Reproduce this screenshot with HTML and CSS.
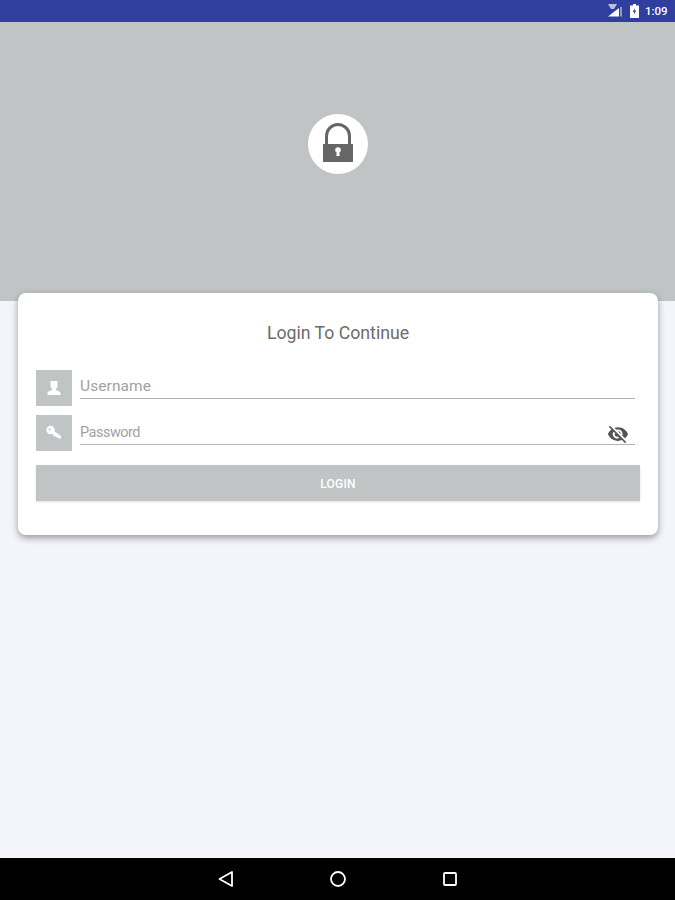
FILE: index.html
```html
<!DOCTYPE html>
<html lang="en">
<head>
  <meta charset="UTF-8" />
  <title>Login</title>
  <meta name="viewport" content="width=device-width, initial-scale=1" />
  <link rel="stylesheet" href="styles.css">
</head>
<body>
  <!-- Status bar -->
  <div class="status-bar">
    <svg class="status-signal" width="16" height="14" viewBox="0 0 16 14">
      <path d="M1 0h9L7 5H4z" fill="#b9c0e4"/>
      <path d="M1 12.500L12 4v8.500z" fill="#fff"/>
      <path d="M13 3h2v9.500h-2z" fill="#8f9ad0"/>
    </svg>
    <svg class="status-battery" width="9" height="14" viewBox="0 0 9 14">
      <path d="M3 0h3v1.500h3V14H0V1.500h3z" fill="#fff"/>
      <path d="M5 3.500L2.800 8h1.500l-.5 3 2.400-4.500H4.500z" fill="#303f9f"/>
    </svg>
    <span class="status-time">1:09</span>
  </div>

  <!-- Grey header with lock -->
  <div class="header">
    <div class="lock-circle">
      <svg width="60" height="60" viewBox="0 0 60 60">
        <path d="M18.500 31v-9a11.500 11.500 0 0 1 23 0v9" fill="none" stroke="#666" stroke-width="3"/>
        <path d="M15 30h30v18H15z" fill="#666"/>
        <circle cx="30" cy="36" r="2.800" fill="#fff"/>
        <path d="M29 36h2l.7 6h-3.400z" fill="#fff"/>
      </svg>
    </div>
  </div>

  <div class="content">
    <div class="card">
      <div class="card-title">Login To Continue</div>

      <div class="field-row">
        <div class="field-icon">
          <svg width="16" height="16" viewBox="0 0 16 16">
            <path d="M4.500 1h7v5.500L9.800 9.500c0 1 3.700 1.500 4.700 3.200V15h-13v-2.300c1-1.700 4.700-2.200 4.700-3.200L4.500 6.500z" fill="#fff"/>
          </svg>
        </div>
        <div class="field-input">
          <span class="placeholder">Username</span>
        </div>
      </div>

      <div class="field-row">
        <div class="field-icon">
          <svg width="18" height="18" viewBox="0 0 18 18">
            <circle cx="5.500" cy="6" r="4.200" fill="#fff"/>
            <path d="M7 5.500l9 6.500v2.500h-2.500l-1.500-1.500-1 .5-1-1.500-1 .2L6 8z" fill="#fff"/>
            <circle cx="4.500" cy="5.500" r="1" fill="#c0c4c4"/>
          </svg>
        </div>
        <div class="field-input field-input-password">
          <span class="placeholder placeholder-password">Password</span>
          <svg class="eye-icon" width="22" height="22" viewBox="0 0 24 24">
            <path fill="#555" d="M12 7c2.760 0 5 2.240 5 5 0 .65-.13 1.260-.36 1.830l2.920 2.920c1.510-1.260 2.700-2.890 3.430-4.750-1.730-4.390-6-7.500-11-7.500-1.400 0-2.740.25-3.980.7l2.160 2.160C10.740 7.130 11.350 7 12 7zM2 4.270l2.280 2.280.46.46C3.080 8.300 1.780 10.020 1 12c1.730 4.390 6 7.500 11 7.500 1.550 0 3.030-.3 4.380-.84l.42.42L19.730 22 21 20.730 3.270 3 2 4.270zM7.530 9.800l1.550 1.550c-.05.21-.8.430-.8.650 0 1.660 1.340 3 3 3 .22 0 .44-.03.65-.08l1.550 1.550c-.67.33-1.410.53-2.200.53-2.760 0-5-2.240-5-5 0-.79.2-1.530.53-2.200zm4.310-.78l3.150 3.150.02-.16c0-1.660-1.340-3-3-3l-.17.01z"/>
          </svg>
        </div>
      </div>

      <button class="login-btn">LOGIN</button>
    </div>
  </div>

  <!-- Android nav bar -->
  <div class="nav-bar">
    <svg width="18" height="18" viewBox="0 0 18 18">
      <path d="M15 2v14L2.500 9z" fill="none" stroke="#fff" stroke-width="1.800" stroke-linejoin="round"/>
    </svg>
    <svg width="18" height="18" viewBox="0 0 18 18">
      <circle cx="9" cy="9" r="7" fill="none" stroke="#fff" stroke-width="1.800"/>
    </svg>
    <svg width="18" height="18" viewBox="0 0 18 18">
      <rect x="3" y="3" width="12" height="12" rx="1" fill="none" stroke="#fff" stroke-width="1.800"/>
    </svg>
  </div>
</body>
</html>
```

FILE: styles.css
```css
html, body {
  height: 100%;
}
body {
  margin: 0;
  background: #f3f5fa;
  font-family: 'Roboto', Arial, sans-serif;
  color: #666;
  display: flex;
  flex-direction: column;
  overflow: hidden;
}
.status-bar {
  height: 22px;
  background: #303f9f;
  display: flex;
  align-items: center;
  justify-content: flex-end;
  padding-right: 6px;
  box-sizing: border-box;
}
.status-signal {
  margin-right: 7px;
}
.status-battery {
  margin-right: 6px;
}
.status-time {
  color: #fff;
  font-size: 11.500px;
  font-weight: 500;
  width: 24px;
}
.header {
  height: 279px;
  background: #c0c4c4;
  display: flex;
  justify-content: center;
  padding-top: 92px;
  box-sizing: border-box;
}
.lock-circle {
  width: 60px;
  height: 60px;
  border-radius: 50%;
  background: #fff;
}
.content {
  flex: 1;
  padding: 0 17px 0 18px;
}
.card {
  margin-top: -8px;
  height: 242px;
  background: #fff;
  border-radius: 8px;
  box-shadow: 0 3px 7px rgba(0,0,0,0.38);
  padding: 0 18px;
  box-sizing: border-box;
}
.card-title {
  font-size: 17.700px;
  color: #6c6c6c;
  text-align: center;
  padding-top: 30px;
  height: 77px;
  line-height: 21px;
  box-sizing: border-box;
}
.field-row {
  display: flex;
  height: 36px;
  margin-bottom: 9px;
}
.field-icon {
  width: 36px;
  height: 36px;
  background: #c0c4c4;
  display: flex;
  align-items: center;
  justify-content: center;
  flex-shrink: 0;
}
.field-input {
  margin-left: 8px;
  width: 555px;
  height: 28px;
  border-bottom: 1.500px solid #b4b6b6;
  display: flex;
  align-items: center;
  justify-content: space-between;
  position: relative;
}
.field-input-password {
  height: 29px;
}
.placeholder {
  font-size: 15.500px;
  letter-spacing: 0.100px;
  color: #a2a2a2;
  padding-top: 4px;
}
.placeholder-password {
  font-size: 14.500px;
  letter-spacing: -0.500px;
  padding-top: 5px;
}
.eye-icon {
  position: absolute;
  right: 6px;
  top: 8px;
}
.login-btn {
  display: block;
  width: 604px;
  height: 36px;
  margin-top: 14px;
  border: none;
  background: #c0c4c4;
  color: #fff;
  font-family: inherit;
  font-size: 12px;
  font-weight: 500;
  letter-spacing: 0.200px;
  padding: 1px 0 0 0;
  box-shadow: 0 1px 2px rgba(0,0,0,0.12);
}
.nav-bar {
  height: 42px;
  background: #000;
  display: flex;
  align-items: center;
  justify-content: center;
  gap: 94px;
}
```
